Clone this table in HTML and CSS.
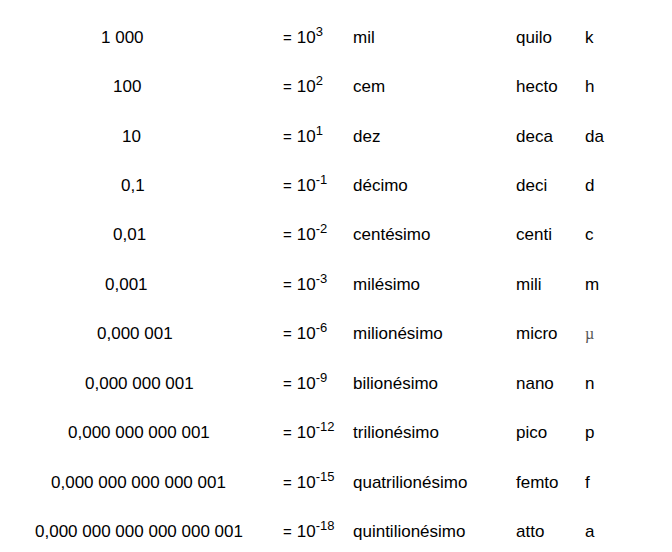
FILE: index.html
```html
<!DOCTYPE html>
<html lang="pt">
<head>
<meta charset="utf-8">
<title>Prefixos SI</title>
<link rel="stylesheet" href="styles.css">
</head>
<body>
<div class="table">
  <div class="num" style="--x:101px">1 000</div><div class="pow"><span class="eq">=</span>10<sup>3</sup></div><div class="name">mil</div><div class="prefix">quilo</div><div class="sym">k</div>
  <div class="num" style="--x:113px">100</div><div class="pow"><span class="eq">=</span>10<sup>2</sup></div><div class="name">cem</div><div class="prefix">hecto</div><div class="sym">h</div>
  <div class="num" style="--x:122px">10</div><div class="pow"><span class="eq">=</span>10<sup>1</sup></div><div class="name">dez</div><div class="prefix">deca</div><div class="sym">da</div>
  <div class="num" style="--x:121px">0,1</div><div class="pow"><span class="eq">=</span>10<sup>-1</sup></div><div class="name">décimo</div><div class="prefix">deci</div><div class="sym">d</div>
  <div class="num" style="--x:113px">0,01</div><div class="pow"><span class="eq">=</span>10<sup>-2</sup></div><div class="name">centésimo</div><div class="prefix">centi</div><div class="sym">c</div>
  <div class="num" style="--x:105px">0,001</div><div class="pow"><span class="eq">=</span>10<sup>-3</sup></div><div class="name">milésimo</div><div class="prefix">mili</div><div class="sym">m</div>
  <div class="num" style="--x:97px">0,000 001</div><div class="pow"><span class="eq">=</span>10<sup>-6</sup></div><div class="name">milionésimo</div><div class="prefix">micro</div><div class="sym mu">µ</div>
  <div class="num" style="--x:85px">0,000 000 001</div><div class="pow"><span class="eq">=</span>10<sup>-9</sup></div><div class="name">bilionésimo</div><div class="prefix">nano</div><div class="sym">n</div>
  <div class="num" style="--x:68px">0,000 000 000 001</div><div class="pow"><span class="eq">=</span>10<sup>-12</sup></div><div class="name">trilionésimo</div><div class="prefix">pico</div><div class="sym">p</div>
  <div class="num" style="--x:51px">0,000 000 000 000 001</div><div class="pow"><span class="eq">=</span>10<sup>-15</sup></div><div class="name">quatrilionésimo</div><div class="prefix">femto</div><div class="sym">f</div>
  <div class="num" style="--x:35px">0,000 000 000 000 000 001</div><div class="pow"><span class="eq">=</span>10<sup>-18</sup></div><div class="name">quintilionésimo</div><div class="prefix">atto</div><div class="sym">a</div>
</div>
</body>
</html>
```
FILE: styles.css
```css
html, body {
  margin: 0;
  padding: 0;
  background: #ffffff;
}
body {
  font-family: "Liberation Sans", Arial, sans-serif;
  font-size: 17px;
  color: #000000;
}
.table {
  display: grid;
  grid-template-columns: 283px 70px 163px 69px 1fr;
  grid-auto-rows: 49.45px;
  padding-top: 13px;
}
.table > div {
  align-self: center;
  line-height: 20px;
  white-space: nowrap;
}
.num {
  padding-left: var(--x);
}
.eq {
  font-size: 15px;
  margin-right: 5px;
}
sup {
  font-size: 13px;
  line-height: 0;
  vertical-align: 7px;
}
.mu {
  font-family: "Liberation Serif", serif;
  font-size: 16px;
  color: #555555;
}
```
